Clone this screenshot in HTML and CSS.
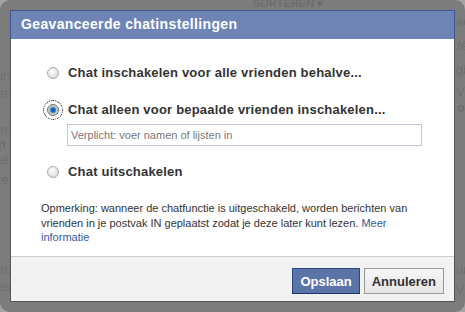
FILE: index.html
```html
<!DOCTYPE html>
<html lang="nl">
  <head>
    <meta charset="UTF-8" />
    <title>Geavanceerde chatinstellingen</title>
    <link rel="stylesheet" href="styles.css">
  </head>
  <body>
    <!-- dimmed page behind the dialog -->
    <div class="page-bits">
      <span class="bit bit-sort">SORTEREN &#9662;</span>
      <span class="bit" style="left:-4px;top:68px">un</span>
      <span class="bit" style="left:-3px;top:86px">er</span>
      <span class="bit" style="left:-3px;top:122px">en</span>
      <span class="bit bit-bold" style="left:-2px;top:136px">n</span>
      <span class="bit" style="left:-2px;top:152px">el</span>
      <span class="bit" style="left:-3px;top:172px">re</span>
      <span class="bit" style="left:-3px;top:262px">eu</span>
      <span class="bit" style="left:-3px;top:279px">es</span>
      <span class="bit" style="left:456px;top:14px">ac</span>
      <span class="bit" style="left:457px;top:38px">fé</span>
      <span class="bit" style="left:456px;top:62px">gis</span>
      <span class="bit" style="left:456px;top:84px">V</span>
      <span class="bit bit-bold" style="left:457px;top:100px">o</span>
      <span class="bit" style="left:456px;top:262px">ur</span>
      <span class="bit" style="left:456px;top:282px">Vi</span>
    </div>

    <div class="frame">
      <div class="dialog">
        <div class="dialog-header">Geavanceerde chatinstellingen</div>

        <div class="dialog-body">
          <label class="option">
            <input type="radio" name="chat" class="radio" />
            <span>Chat inschakelen voor alle vrienden behalve...</span>
          </label>

          <label class="option option-focus">
            <input type="radio" name="chat" class="radio" checked />
            <span>Chat alleen voor bepaalde vrienden inschakelen...</span>
          </label>
          <input type="text" class="names-input" placeholder="Verplicht: voer namen of lijsten in" />

          <label class="option">
            <input type="radio" name="chat" class="radio" />
            <span>Chat uitschakelen</span>
          </label>

          <p class="note">
            Opmerking: wanneer de chatfunctie is uitgeschakeld, worden berichten van
            vrienden in je postvak IN geplaatst zodat je deze later kunt lezen.
            <a href="#">Meer informatie</a>
          </p>
        </div>

        <div class="dialog-footer">
          <button class="btn btn-primary">Opslaan</button>
          <button class="btn">Annuleren</button>
        </div>
      </div>
    </div>
  </body>
</html>
```
FILE: styles.css
```css
/* Global Styles */
body {
  margin: 0;
  width: 465px;
  height: 312px;
  overflow: hidden;
  position: relative;
  background: #a3a3a3;
  font-family: "Liberation Sans", Arial, sans-serif;
  color: #333;
}

/* faint page text showing through the overlay */
.page-bits {
  position: absolute;
  inset: 0;
}

.bit {
  position: absolute;
  font-size: 13px;
  color: #6c6c6c;
  filter: blur(0.4px);
}

.bit-bold,
.bit-sort {
  font-weight: bold;
}

.bit-sort {
  left: 253px;
  top: -3px;
  font-size: 11px;
}

/* Dialog frame */
.frame {
  position: relative;
  height: 292px;
  padding: 10px;
  border-radius: 10px;
  background: rgba(110, 110, 110, 0.72);
}

.dialog {
  background: #fff;
  border: 1px solid #555;
  border-top: none;
  height: 291px;
  display: flex;
  flex-direction: column;
}

.dialog-header {
  margin: 0 -1px;
  padding: 5px 10px 6px;
  background: #6d84b4;
  border: 1px solid #3b5998;
  border-bottom: none;
  color: #fff;
  font-size: 14px;
  font-weight: bold;
  line-height: 17px;
  letter-spacing: 0.35px;
}

.dialog-body {
  flex: 1;
  padding: 26px 30px 0;
}

.option {
  display: flex;
  align-items: center;
  height: 16px;
  margin-left: 3px;
  font-size: 13px;
  font-weight: bold;
  line-height: 16px;
  letter-spacing: 0.2px;
  margin-bottom: 21px;
}

.option-focus .radio {
  outline: 1px dotted #000;
  outline-offset: 3px;
}

.radio {
  appearance: none;
  width: 12px;
  height: 12px;
  margin: 0 9px 0 3px;
  border-radius: 50%;
  border: 1px solid #a9a9a9;
  background: radial-gradient(circle at 40% 35%, #fff, #e4e4e4 60%, #c8c8c8);
  box-sizing: border-box;
}

.radio:checked {
  border-color: #6e6e6e;
  background: radial-gradient(circle at 50% 50%, #0c4e86 0, #1c78c6 2px, #4f9ad6 3px, #c4c4c4 3.6px, #f0f0f0 100%);
}

.option-focus {
  margin-bottom: 6px;
}

.names-input {
  display: block;
  box-sizing: border-box;
  width: 355px;
  height: 22px;
  margin: 0 0 18px 26px;
  padding: 0 3px;
  border: 1px solid #bdc7d8;
  font-family: inherit;
  font-size: 11px;
}

.names-input::placeholder {
  color: #777;
}

.note {
  margin: 15px 0 0;
  width: 384px;
  font-size: 11px;
  line-height: 14.5px;
  color: #333;
}

.note a {
  color: #3b5998;
  text-decoration: none;
}

.dialog-footer {
  display: flex;
  justify-content: flex-end;
  gap: 4px;
  height: 45px;
  box-sizing: border-box;
  padding: 11px 10px 0;
  background: #f2f2f2;
  border-top: 1px solid #ccc;
}

.btn {
  height: 26px;
  padding: 0 7px;
  border: 1px solid #999;
  background: linear-gradient(#f6f6f6, #e6e6e6);
  color: #333;
  font-family: inherit;
  font-size: 13px;
  font-weight: bold;
  cursor: pointer;
}

.btn-primary {
  background: #5b74a8;
  border-color: #29447e #29447e #1a356e;
  color: #fff;
}
```
